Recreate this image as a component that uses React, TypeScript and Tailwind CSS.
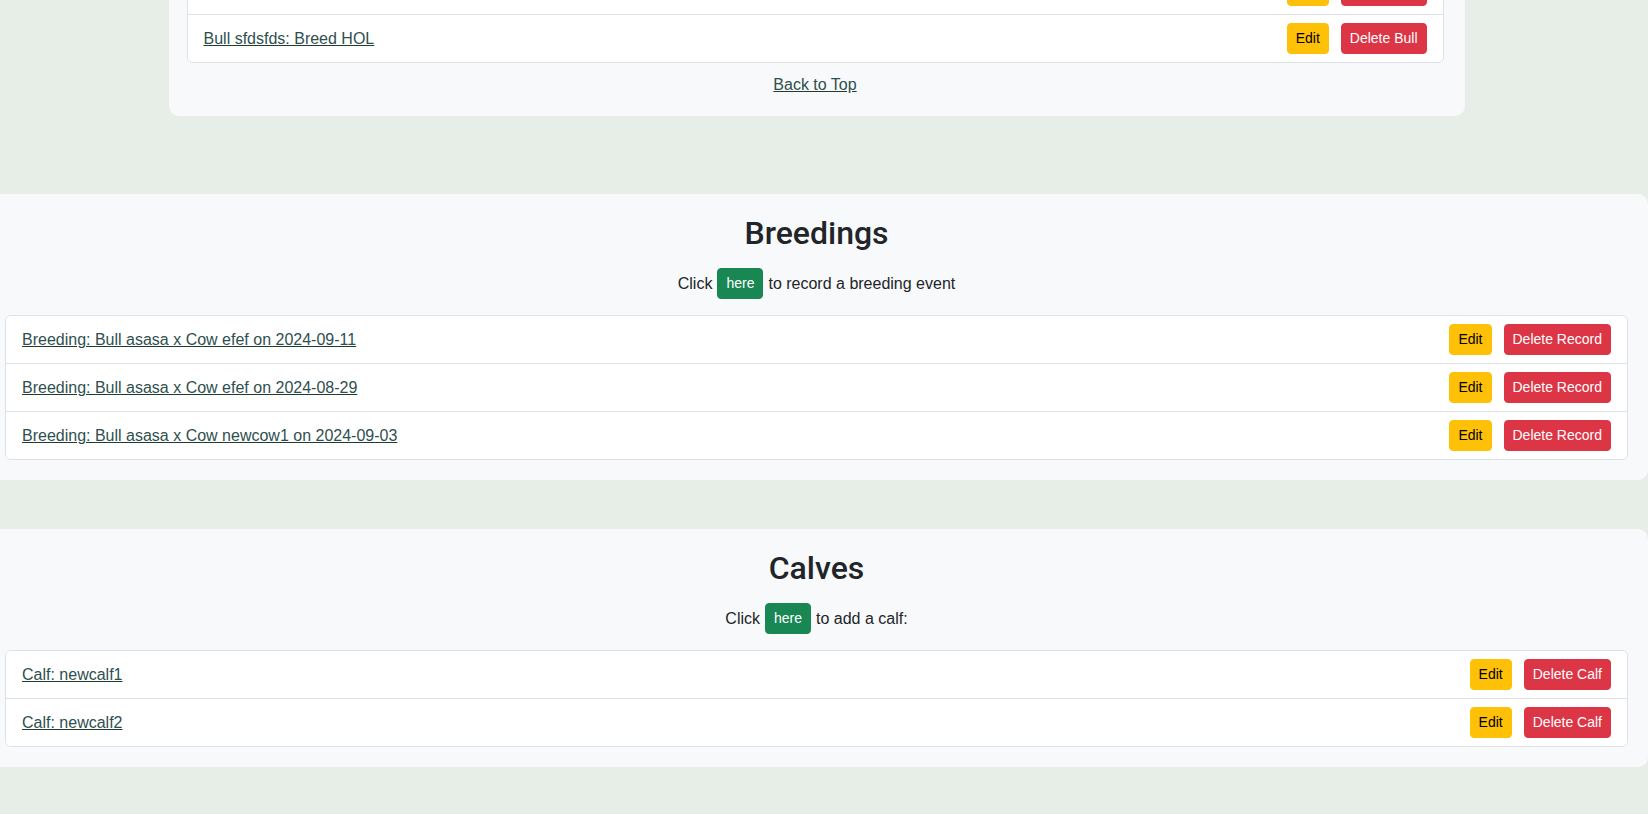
import React from "react";

const font = { fontFamily: '"Segoe UI", "Liberation Sans", Arial, sans-serif' };

function Row({ label, del }: { label: string; del: string }) {
  return (
    <div className="flex items-center justify-between px-4 py-2 bg-white">
      <a href="#" className="text-[16px] leading-6 text-[#2f4f4f] underline decoration-[#1f3d2f]">
        {label}
      </a>
      <div className="flex items-center gap-3">
        <button className="rounded-[4px] border border-[#ffc107] bg-[#ffc107] px-2 py-1 text-[14px] leading-[21px] text-black">
          Edit
        </button>
        <button className="rounded-[4px] border border-[#dc3545] bg-[#dc3545] px-2 py-1 text-[14px] leading-[21px] text-white">
          {del}
        </button>
      </div>
    </div>
  );
}

function Section({
  title,
  after,
  rows,
  del,
}: {
  title: string;
  after: string;
  rows: string[];
  del: string;
}) {
  return (
    <section className="-mx-[15px] rounded-[10px] bg-[#f8f9fa] px-5 pt-5 pb-5">
      <h2 className="text-center font-[Roboto,'Liberation_Sans',sans-serif] text-[32px] font-medium leading-[38px] text-[#212529] mb-2">
        {title}
      </h2>
      <p className="flex items-center justify-center gap-[5px] pt-2 pb-4 text-[16px] leading-6 text-[#212529]">
        <span>Click</span>
        <button className="rounded-[4px] border border-[#198754] bg-[#198754] px-2 py-1 text-[14px] leading-[21px] text-white">
          here
        </button>
        <span>{after}</span>
      </p>
      <div className="overflow-hidden rounded-md border border-[#dee2e6] divide-y divide-[#dee2e6]">
        {rows.map((r) => (
          <Row key={r} label={r} del={del} />
        ))}
      </div>
    </section>
  );
}

export default function App() {
  return (
    <div className="min-h-[814px] overflow-hidden bg-[#e7eee7] text-[#212529]" style={font}>
      <div className="pr-[15px] pb-12">
        <div className="mx-auto w-[1296px] -mt-[34px] rounded-b-[10px] bg-[#f8f9fa] pl-[18px] pr-[21px] pb-[19px]">
          <div className="overflow-hidden rounded-b-md border border-[#dee2e6] divide-y divide-[#dee2e6]">
            <Row label="Bull asasa: Breed JER" del="Delete Bull" />
            <Row label="Bull sfdsfds: Breed HOL" del="Delete Bull" />
          </div>
          <div className="mt-[10px] text-center">
            <a href="#" className="text-[16px] leading-6 text-[#2f4f4f] underline decoration-[#1f3d2f]">
              Back to Top
            </a>
          </div>
        </div>

        <div className="mt-[78px]">
          <Section
            title="Breedings"
            after="to record a breeding event"
            del="Delete Record"
            rows={[
              "Breeding: Bull asasa x Cow efef on 2024-09-11",
              "Breeding: Bull asasa x Cow efef on 2024-08-29",
              "Breeding: Bull asasa x Cow newcow1 on 2024-09-03",
            ]}
          />
        </div>

        <div className="mt-[49px]">
          <Section
            title="Calves"
            after="to add a calf:"
            del="Delete Calf"
            rows={["Calf: newcalf1", "Calf: newcalf2"]}
          />
        </div>
      </div>
    </div>
  );
}
